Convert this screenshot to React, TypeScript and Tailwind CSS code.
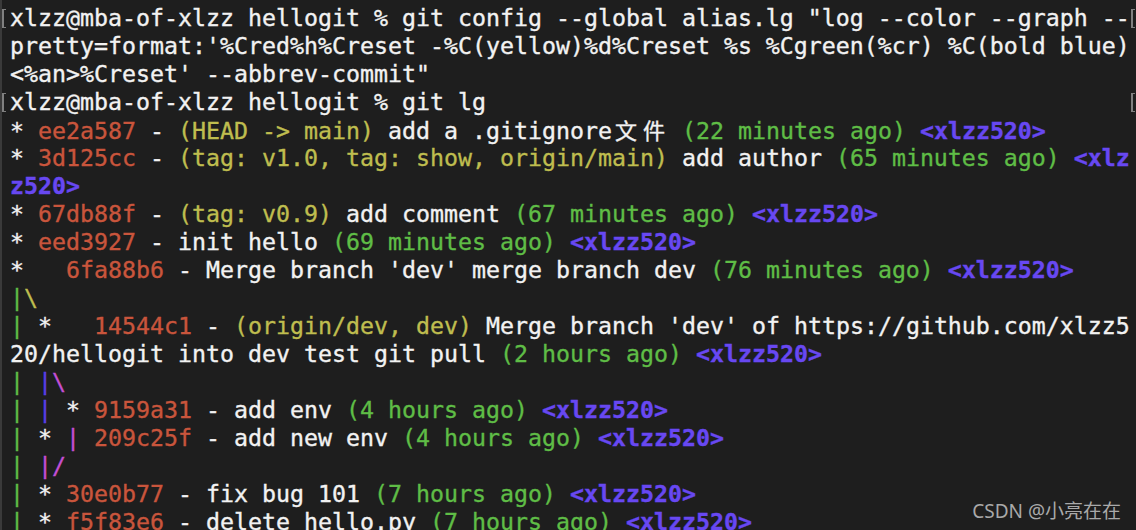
import React from "react";

type Seg = [string, string] | { cjk: string; cls: string };

const W = "text-[#f2f2f2]";
const R = "text-[#c9553c]";
const Y = "text-[#bfbd4f]";
const G = "text-[#5fbd46]";
const B = "font-bold text-[#6848f2]";
const GB = "text-[#5a3ee8]";
const M = "text-[#c44fd4]";

const author: Seg = [" <xlzz520>", B];

const lines: { segs: Seg[]; mark?: boolean }[] = [
  {
    mark: true,
    segs: [['xlzz@mba-of-xlzz hellogit % git config --global alias.lg "log --color --graph --', W]],
  },
  {
    segs: [["pretty=format:'%Cred%h%Creset -%C(yellow)%d%Creset %s %Cgreen(%cr) %C(bold blue)", W]],
  },
  { segs: [["<%an>%Creset' --abbrev-commit\"", W]] },
  { mark: true, segs: [["xlzz@mba-of-xlzz hellogit % git lg", W]] },
  {
    segs: [
      ["* ", W],
      ["ee2a587", R],
      [" - ", W],
      ["(HEAD -> main)", Y],
      [" add a .gitignore", W],
      { cjk: "文", cls: W },
      { cjk: "件", cls: W },
      [" ", W],
      ["(22 minutes ago)", G],
      author,
    ],
  },
  {
    segs: [
      ["* ", W],
      ["3d125cc", R],
      [" - ", W],
      ["(tag: v1.0, tag: show, origin/main)", Y],
      [" add author ", W],
      ["(65 minutes ago)", G],
      [" <xlz", B],
    ],
  },
  { segs: [["z520>", B]] },
  {
    segs: [
      ["* ", W],
      ["67db88f", R],
      [" - ", W],
      ["(tag: v0.9)", Y],
      [" add comment ", W],
      ["(67 minutes ago)", G],
      author,
    ],
  },
  {
    segs: [
      ["* ", W],
      ["eed3927", R],
      [" - init hello ", W],
      ["(69 minutes ago)", G],
      author,
    ],
  },
  {
    segs: [
      ["*   ", W],
      ["6fa88b6", R],
      [" - Merge branch 'dev' merge branch dev ", W],
      ["(76 minutes ago)", G],
      author,
    ],
  },
  { segs: [["|", G], ["\\", Y]] },
  {
    segs: [
      ["|", G],
      [" *   ", W],
      ["14544c1", R],
      [" - ", W],
      ["(origin/dev, dev)", Y],
      [" Merge branch 'dev' of https://github.com/xlzz5", W],
    ],
  },
  {
    segs: [
      ["20/hellogit into dev test git pull ", W],
      ["(2 hours ago)", G],
      author,
    ],
  },
  { segs: [["|", G], [" ", W], ["|", GB], ["\\", M]] },
  {
    segs: [
      ["|", G],
      [" ", W],
      ["|", GB],
      [" * ", W],
      ["9159a31", R],
      [" - add env ", W],
      ["(4 hours ago)", G],
      author,
    ],
  },
  {
    segs: [
      ["|", G],
      [" * ", W],
      ["|", M],
      [" ", W],
      ["209c25f", R],
      [" - add new env ", W],
      ["(4 hours ago)", G],
      author,
    ],
  },
  { segs: [["|", G], [" ", W], ["|/", M]] },
  {
    segs: [
      ["|", G],
      [" * ", W],
      ["30e0b77", R],
      [" - fix bug 101 ", W],
      ["(7 hours ago)", G],
      author,
    ],
  },
  {
    segs: [
      ["|", G],
      [" * ", W],
      ["f5f83e6", R],
      [" - delete hello.py ", W],
      ["(7 hours ago)", G],
      author,
    ],
  },
];

// terminal's line marker, drawn as a thin gray bracket
const Mark: React.FC = () => (
  <div className="h-[19px] w-[4px] border-y border-l-2 border-[#808080]" />
);

export default function App() {
  return (
    <div className="relative h-[530px] w-[1136px] overflow-hidden border-l-2 border-[#3a3a3a] bg-[#1e1e1e] pt-[4px] font-['DejaVu_Sans_Mono',monospace] text-[23.25px] leading-[28px] [-webkit-text-stroke:0.35px]">
      {lines.map((line, i) => (
        <div key={i} className="flex h-[28px] items-center">
          <div className="flex w-[8px] shrink-0 items-center">
            {line.mark && <Mark />}
          </div>
          <div className="w-[1121px] shrink-0 whitespace-pre">
            {line.segs.map((s, j) =>
              Array.isArray(s) ? (
                <span key={j} className={s[1]}>
                  {s[0]}
                </span>
              ) : (
                <span
                  key={j}
                  className={`inline-block w-[28px] text-center font-['Noto_Sans_CJK_SC',sans-serif] text-[22px] ${s.cls}`}
                >
                  {s.cjk}
                </span>
              )
            )}
          </div>
          <div className="flex shrink-0 items-center">
            {line.mark && <Mark />}
          </div>
        </div>
      ))}

      {/* watermark */}
      <div className="absolute bottom-[8px] right-[15px] font-['Noto_Sans','Noto_Sans_CJK_SC',sans-serif] text-[19px] leading-[22px] text-[#a9a9a9] [-webkit-text-stroke:0px]">
        CSDN @小亮在在
      </div>
    </div>
  );
}
